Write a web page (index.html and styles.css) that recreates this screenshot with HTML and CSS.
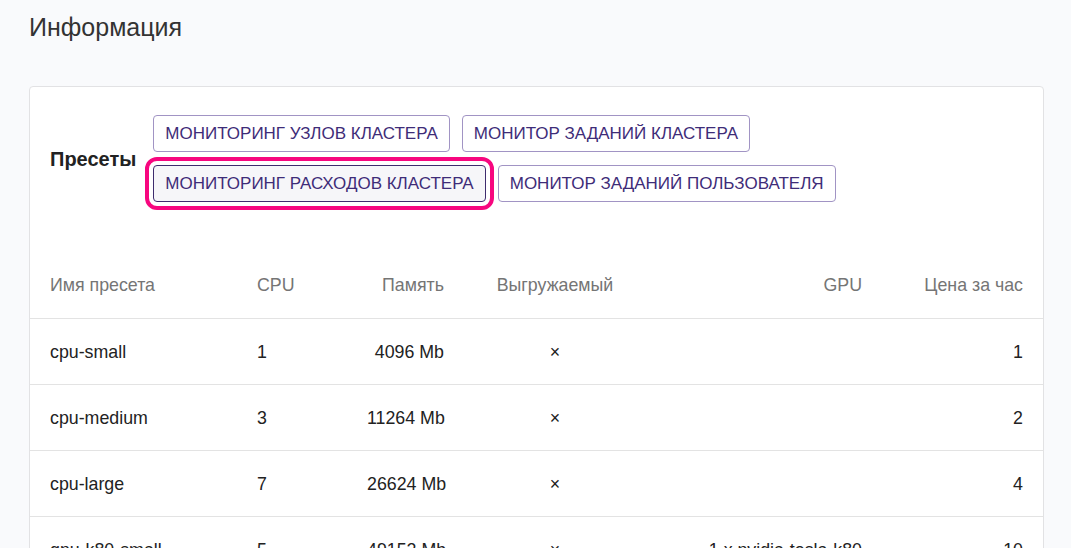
FILE: index.html
```html
<!DOCTYPE html>
<html lang="ru">
<head>
<meta charset="utf-8">
<title>Информация</title>
<link rel="stylesheet" href="styles.css">
</head>
<body>
<main class="page">
  <h1 class="title">Информация</h1>
  <section class="card">
    <div class="presets">
      <div class="presets-label">Пресеты</div>
      <div class="preset-buttons">
        <button class="preset-btn">Мониторинг узлов кластера</button>
        <button class="preset-btn">Монитор заданий кластера</button>
        <button class="preset-btn is-active">Мониторинг расходов кластера</button>
        <button class="preset-btn">Монитор заданий пользователя</button>
      </div>
    </div>
    <table class="presets-table">
      <colgroup>
        <col class="c-name"><col class="c-cpu"><col class="c-mem"><col class="c-pre"><col class="c-gpu"><col class="c-price">
      </colgroup>
      <thead>
        <tr>
          <th class="left">Имя пресета</th>
          <th class="left">CPU</th>
          <th class="right">Память</th>
          <th class="center">Выгружаемый</th>
          <th class="right">GPU</th>
          <th class="right">Цена за час</th>
        </tr>
      </thead>
      <tbody>
        <tr>
          <td class="left">cpu-small</td><td class="left">1</td><td class="right">4096 Mb</td><td class="center">×</td><td class="right"></td><td class="right">1</td>
        </tr>
        <tr>
          <td class="left">cpu-medium</td><td class="left">3</td><td class="right">11264 Mb</td><td class="center">×</td><td class="right"></td><td class="right">2</td>
        </tr>
        <tr>
          <td class="left">cpu-large</td><td class="left">7</td><td class="right">26624 Mb</td><td class="center">×</td><td class="right"></td><td class="right">4</td>
        </tr>
        <tr>
          <td class="left">gpu-k80-small</td><td class="left">5</td><td class="right">49152 Mb</td><td class="center">×</td><td class="right">1 x nvidia-tesla-k80</td><td class="right">10</td>
        </tr>
      </tbody>
    </table>
  </section>
</main>
</body>
</html>
```

FILE: styles.css
```css
html, body {
  margin: 0;
  padding: 0;
  background: #f9fafc;
  font-family: "Liberation Sans", Arial, sans-serif;
  color: #222;
}

.page {
  padding: 0 27px 0 29px;
}

.title {
  margin: 0;
  padding-top: 13px;
  height: 86px;
  box-sizing: border-box;
  font-size: 25px;
  font-weight: normal;
  color: #333;
  line-height: 29px;
}

.card {
  background: #fff;
  border: 1px solid #e2e2e4;
  border-radius: 4px;
}

.presets {
  display: flex;
  align-items: center;
  gap: 17px;
  padding: 28px 20px 0 20px;
}

.presets-label {
  font-weight: bold;
  font-size: 20px;
  color: #222;
  padding-top: 2px;
}

.preset-buttons {
  display: flex;
  flex-wrap: wrap;
  gap: 13px 12px;
  width: 720px;
}

.preset-btn {
  height: 37px;
  padding: 0 11px;
  background: #fff;
  border: 1px solid #a194c4;
  border-radius: 4px;
  font-family: "Liberation Sans", Arial, sans-serif;
  font-size: 17px;
  color: #3e2c78;
  text-transform: uppercase;
  cursor: pointer;
}

.preset-btn.is-active {
  background: #f6f6f9;
  border-color: #3e2c6e;
  outline: 4px solid #f7067f;
  outline-offset: 4px;
}

.presets-table {
  width: 100%;
  margin-top: 51px;
  border-collapse: collapse;
  table-layout: fixed;
  font-size: 17.8px;
}

.c-name { width: 207px; }
.c-cpu { width: 110px; }
.c-mem { width: 117px; }
.c-pre { width: 182px; }
.c-gpu { width: 236px; }
.c-price { width: auto; }

.presets-table th,
.presets-table td {
  height: 65px;
  padding: 0 20px;
  white-space: nowrap;
}

.presets-table th {
  font-weight: normal;
  color: #757575;
}

.presets-table td {
  height: 63px;
  padding-top: 2px;
  color: #222;
}

.presets-table thead tr,
.presets-table tbody tr {
  border-bottom: 1px solid #e3e3e3;
}

.left { text-align: left; }
.right { text-align: right; }
.center { text-align: center; }
```
